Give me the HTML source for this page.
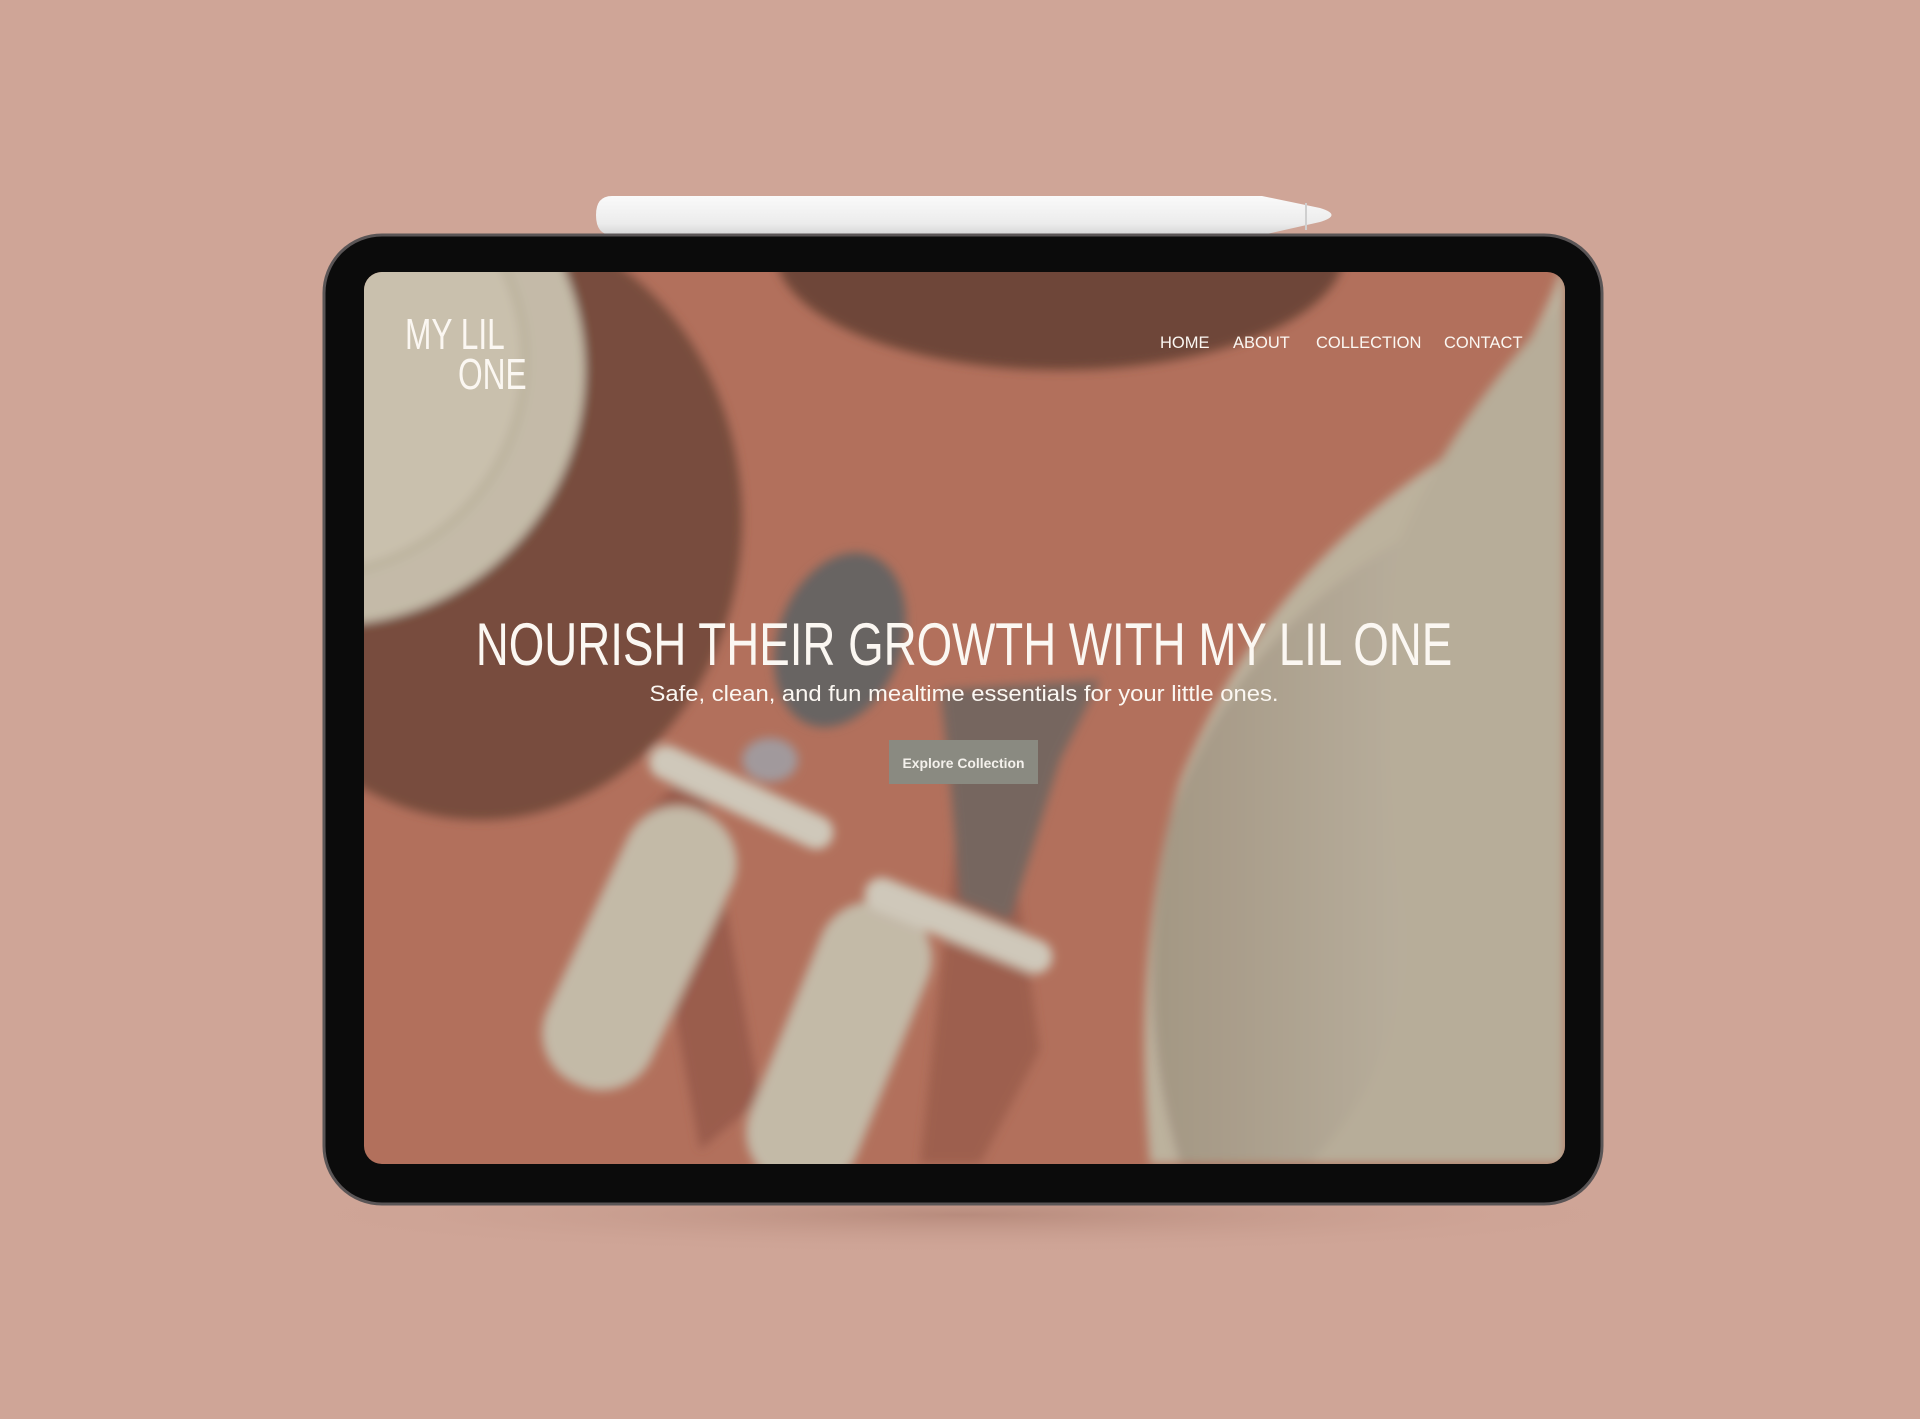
<!DOCTYPE html>
<html><head><meta charset="utf-8"><style>
html,body{margin:0;padding:0;width:1920px;height:1419px;overflow:hidden;background:#cfa597;}
svg{display:block}
</style></head><body>
<svg width="1920" height="1419" viewBox="0 0 1920 1419" xmlns="http://www.w3.org/2000/svg">
<defs>
<clipPath id="scr"><rect x="364" y="272" width="1201" height="892" rx="18"/></clipPath>
<radialGradient id="sh" cx="0.5" cy="0.5" r="0.5"><stop offset="0" stop-color="#a87a6b" stop-opacity="0.6"/><stop offset="1" stop-color="#cfa597" stop-opacity="0"/></radialGradient>
<linearGradient id="pen" x1="0" y1="0" x2="0" y2="1"><stop offset="0" stop-color="#fafafa"/><stop offset="0.7" stop-color="#ececec"/><stop offset="1" stop-color="#d6d6d6"/></linearGradient>
<linearGradient id="rp" x1="0" y1="0" x2="1" y2="0"><stop offset="0" stop-color="#a99c88"/><stop offset="1" stop-color="#bdb3a0"/></linearGradient>
<filter id="bl"><feGaussianBlur stdDeviation="5"/></filter>
</defs>
<rect width="1920" height="1419" fill="#cfa597"/>
<ellipse cx="963" cy="1215" rx="700" ry="40" fill="url(#sh)"/>
<path d="M612 196 H1262 L1320 208 Q1343 215 1320 222 L1262 235 H612 Q596 235 596 215 Q596 196 612 196Z" fill="url(#pen)"/>
<line x1="1306" y1="203" x2="1306" y2="230" stroke="#cfcfcf" stroke-width="2"/>
<rect x="324" y="235" width="1278" height="969" rx="58" fill="#0b0b0b" stroke="#5a5556" stroke-width="3"/>
<g clip-path="url(#scr)">
<rect x="364" y="272" width="1201" height="892" fill="#b8745f"/>
<g filter="url(#bl)">
<ellipse cx="480" cy="520" rx="262" ry="300" fill="#7c4f3f"/>
<ellipse cx="1060" cy="250" rx="285" ry="120" fill="#72483a"/>
<circle cx="330" cy="370" r="255" fill="#cbc1ae"/>
<circle cx="310" cy="360" r="215" fill="#d0c7b3" stroke="#bfb49f" stroke-width="6"/>
<path d="M1565 272 L1565 1164 L1150 1164 Q1130 950 1180 780 Q1260 580 1440 460 Q1520 380 1560 272Z" fill="#c3b8a3"/>
<path d="M1400 540 Q1370 700 1400 900 Q1420 1050 1310 1164 L1180 1164 Q1130 1000 1170 820 Q1230 640 1400 540Z" fill="url(#rp)"/>
<path d="M1565 300 Q1450 420 1400 540 Q1370 700 1400 900 Q1420 1050 1310 1164 L1565 1164Z" fill="#bdb39e"/>
<path d="M700 760 L760 1100 L700 1150 L640 820Z" fill="#8f5444" opacity="0.6"/>
<path d="M1000 760 L1040 1050 L980 1164 L920 1164 L960 800Z" fill="#8f5444" opacity="0.5"/>
<g transform="rotate(20 840 640)"><ellipse cx="840" cy="640" rx="62" ry="90" fill="#6c6766"/></g>
<ellipse cx="770" cy="760" rx="28" ry="22" fill="#9fb0bd" opacity="0.7"/>
<path d="M940 690 L1100 680 L1060 760 L1010 920 L960 900 L950 780Z" fill="#7a6a63"/>
<g transform="rotate(25 650 920)"><rect x="595" y="800" width="115" height="300" rx="55" fill="#cac0ad"/></g>
<g transform="rotate(25 740 800)"><rect x="640" y="780" width="200" height="34" rx="17" fill="#d6cfc0"/></g>
<g transform="rotate(22 860 1000)"><rect x="800" y="900" width="115" height="300" rx="55" fill="#cac0ad"/></g>
<g transform="rotate(22 950 920)"><rect x="860" y="905" width="200" height="34" rx="17" fill="#d6cfc0"/></g>
</g>
<rect x="364" y="272" width="1201" height="892" fill="#000" opacity="0.03"/>
</g>
<g fill="#fbf7f2" font-family="'Liberation Sans', sans-serif">
<text transform="translate(405 349) scale(0.72 1)" font-size="44" font-weight="300">MY LIL</text>
<text transform="translate(458 389) scale(0.72 1)" font-size="44">ONE</text>
<text x="1160" y="348" font-size="16.5">HOME</text>
<text x="1233" y="348" font-size="16.5">ABOUT</text>
<text x="1316" y="348" font-size="16.5">COLLECTION</text>
<text x="1444" y="348" font-size="16.5">CONTACT</text>
<text transform="translate(964 665) scale(0.78 1)" text-anchor="middle" font-size="60" textLength="1252" lengthAdjust="spacingAndGlyphs">NOURISH THEIR GROWTH WITH MY LIL ONE</text>
<text x="964" y="701" text-anchor="middle" font-size="22" textLength="629" lengthAdjust="spacingAndGlyphs">Safe, clean, and fun mealtime essentials for your little ones.</text>
</g>
<rect x="889" y="740" width="149" height="44" fill="#8a8a81"/>
<text x="963.5" y="768" text-anchor="middle" font-family="'Liberation Sans', sans-serif" font-weight="bold" font-size="14" fill="#f4f1ec" textLength="122" lengthAdjust="spacingAndGlyphs">Explore Collection</text>
</svg>
</body></html>
